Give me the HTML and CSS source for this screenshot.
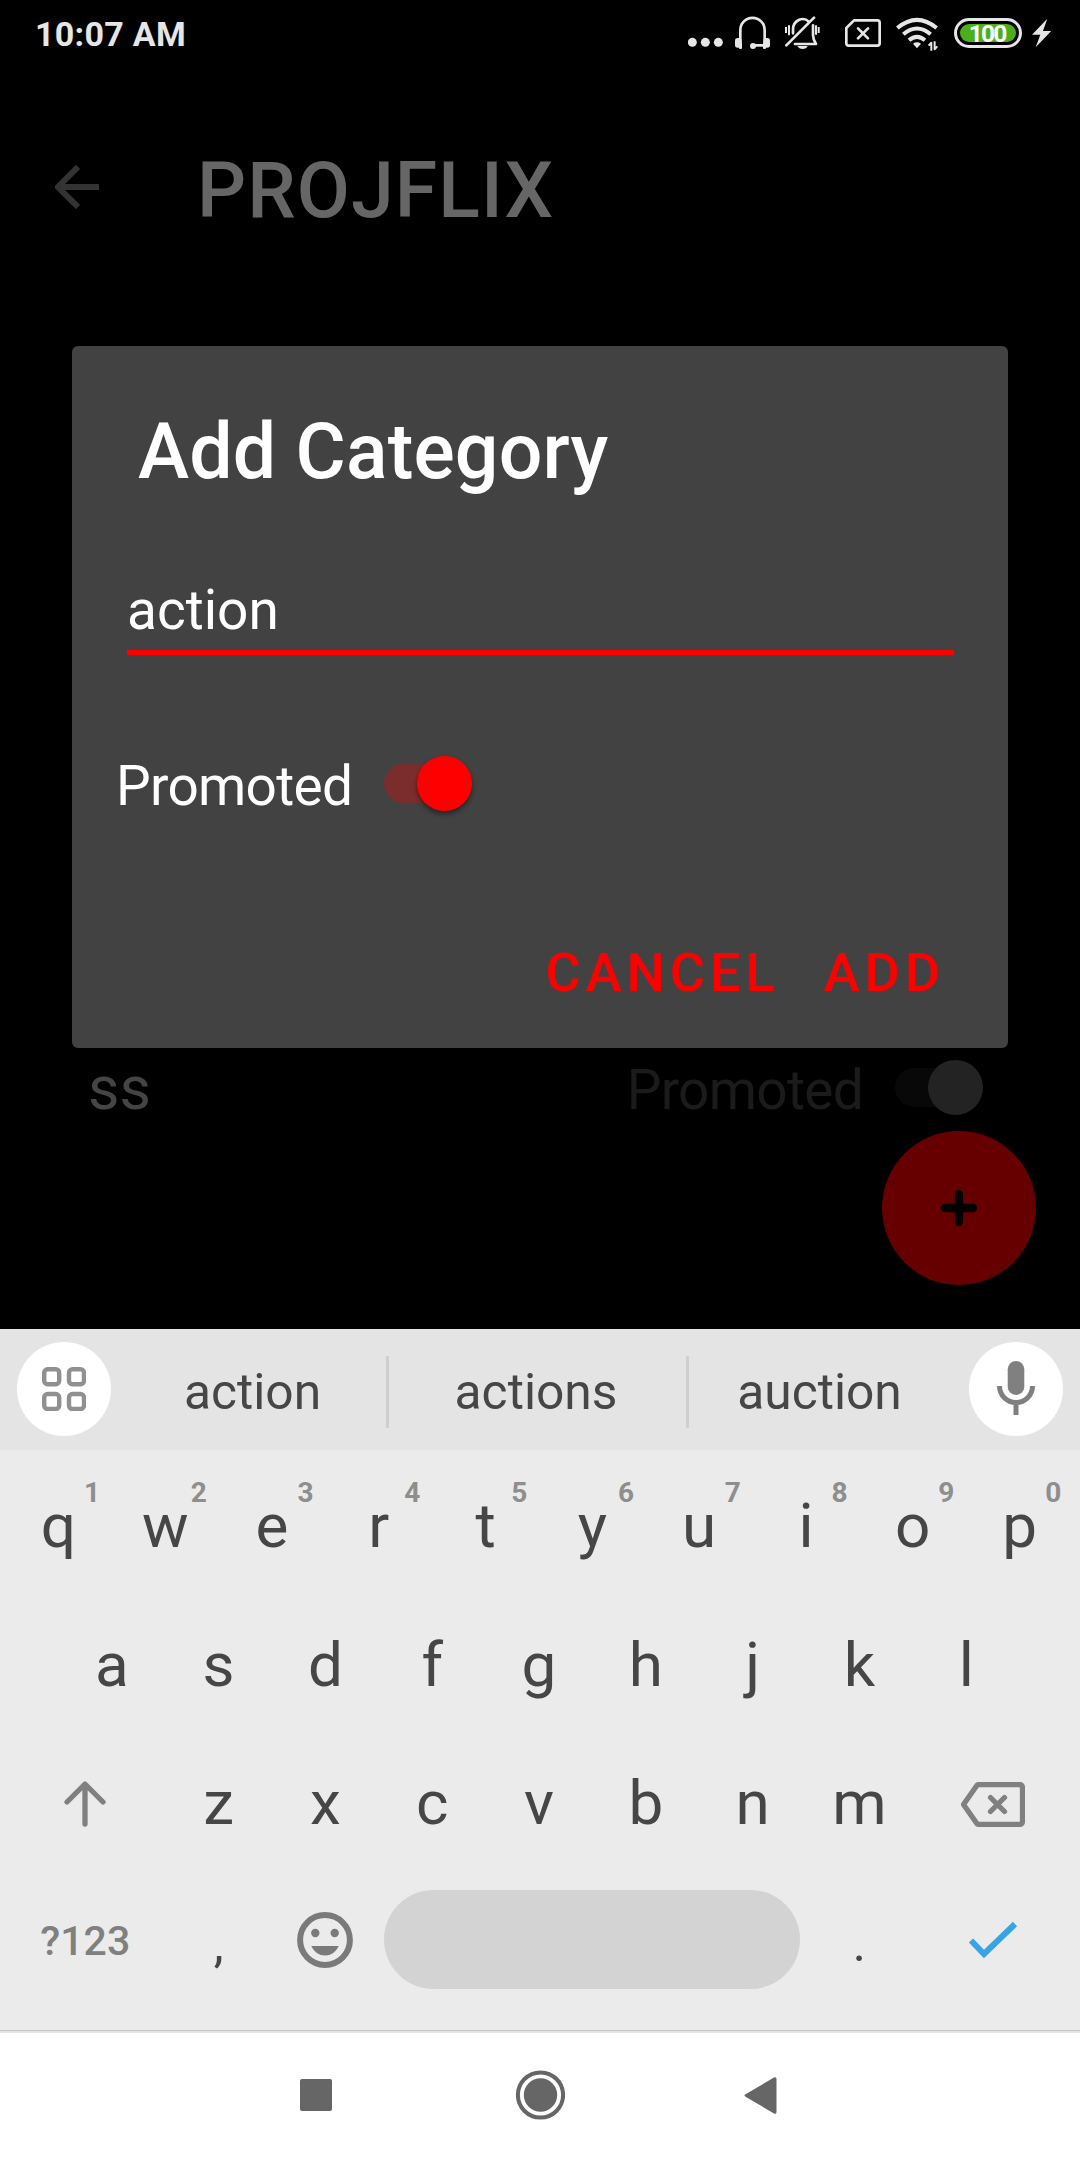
FILE: index.html
```html
<!DOCTYPE html>
<html lang="en">
<head>
<meta charset="utf-8">
<title>Projflix</title>
<link rel="stylesheet" href="styles.css">
</head>
<body>
<div class="screen">
  <div class="app">
    <header class="status-bar">
      <span class="clock">10:07 AM</span>
      <div class="status-icons">
        <svg class="st-dots" viewBox="54 0 105 210"><circle cx="67" cy="127" r="13.5"/><circle cx="106" cy="127" r="13.5"/><circle cx="145" cy="127" r="13.5"/></svg>
        <svg class="st-headset" viewBox="195 0 105 210"><path class="line" d="M211 140V90a36 36 0 0 1 73 0v50M284 136H250"/><rect x="195" y="114" width="20" height="29" rx="8"/><rect x="280" y="114" width="20" height="29" rx="8"/><rect x="207" y="128" width="9" height="19" rx="3"/><rect x="279" y="128" width="9" height="19" rx="3"/><circle cx="249" cy="138" r="9"/></svg>
        <svg class="st-bell" viewBox="347 0 104 210"><path class="line" d="M371 100V88a29 31 0 0 1 48-23M431 76v30q0 12 9 26H377"/><path class="line" d="M351 136 434 53"/><path class="line thin" d="M350 81v18M359 76v30M440 76v28M448 81v18"/><path d="M384 138h31q-4 9-15 9t-16-9z"/></svg>
        <svg class="st-sim" viewBox="525 0 108 210"><path class="line" d="M552 61h70q7 0 7 7v62q0 7-7 7h-86q-7 0-7-7V84zM564 85l30 30M594 85l-30 30"/></svg>
        <svg class="st-wifi" viewBox="678 0 127 210"><path class="line arc" d="M682 84q59-49 118 0M700 103q41-35 82 0M717 121q24-21 48 0"/><path d="M729 131q12-9 24 0l-12 14z"/><path class="line thin" d="M784 152v-24l-8 9M794 124v24l8-9"/></svg>
        <div class="battery"><span class="battery-level">100</span></div>
        <svg class="st-bolt" viewBox="1086 0 58 210"><path d="M1132 56 1086 104h25l-14 38 47-49h-25z"/></svg>
      </div>
    </header>
    <div class="app-header">
      <svg class="back" viewBox="55 165 44 44"><path d="M99 187H59M78 167 58 187l20 20"/></svg>
      <h1 class="brand">PROJFLIX</h1>
    </div>
    <main class="list">
      <div class="category">
        <span class="category-name">ss</span>
        <span class="category-flag">Promoted</span>
        <span class="switch switch-dim"><i class="thumb"></i></span>
      </div>
    </main>
    <div class="fab"><svg viewBox="0 0 36 36"><path d="M18 4v28M4 18h28"/></svg></div>
    <section class="dialog">
      <h2 class="dialog-title">Add Category</h2>
      <div class="field">action</div>
      <div class="toggle"><span>Promoted</span><span class="switch"><i class="thumb"></i></span></div>
      <div class="actions"><span>CANCEL</span><span>ADD</span></div>
    </section>
  </div>

  <div class="suggestions">
    <div class="round"><svg class="grid-icon" viewBox="0 0 44 44"><rect x="2.2" y="2.2" width="15" height="15" rx="3.5"/><rect x="27" y="2.2" width="15" height="15" rx="3.5"/><rect x="2.2" y="27" width="15" height="15" rx="3.5"/><rect x="27" y="27" width="15" height="15" rx="3.5"/></svg></div>
    <div class="words"><span class="word">action</span><span class="word">actions</span><span class="word">auction</span></div>
    <div class="round"><svg class="mic" viewBox="0 0 38 54"><rect x="10.7" y="0" width="16.6" height="34" rx="8.3"/><path d="M2.5 25a16.5 16.5 0 0 0 33 0M19 43v11"/></svg></div>
  </div>

  <div class="keyboard">
    <div class="row">
      <span class="key">q<b>1</b></span><span class="key">w<b>2</b></span><span class="key">e<b>3</b></span><span class="key">r<b>4</b></span><span class="key">t<b>5</b></span><span class="key">y<b>6</b></span><span class="key">u<b>7</b></span><span class="key">i<b>8</b></span><span class="key">o<b>9</b></span><span class="key">p<b>0</b></span>
    </div>
    <div class="row">
      <span class="key">a</span><span class="key">s</span><span class="key">d</span><span class="key">f</span><span class="key">g</span><span class="key">h</span><span class="key">j</span><span class="key">k</span><span class="key">l</span>
    </div>
    <div class="row">
      <span class="key wide"><svg class="shift" viewBox="0 0 42 46"><path d="M21 43V4M3 21 21 3l18 18"/></svg></span>
      <span class="key">z</span><span class="key">x</span><span class="key">c</span><span class="key">v</span><span class="key">b</span><span class="key">n</span><span class="key">m</span>
      <span class="key wide"><svg class="erase" viewBox="0 0 64 45"><path d="M18 2.5h40q3.500 0 3.500 3.500v33q0 3.500-3.500 3.500H18q-1.500 0-2.500-1.500L2.500 22.500 15.500 4q1-1.500 2.500-1.500zM29.500 15.500l14 14M43.500 15.500l-14 14"/></svg></span>
    </div>
    <div class="row bottom">
      <span class="key wide mode">?123</span>
      <span class="key mark">,</span>
      <span class="key"><svg class="smile" viewBox="0 0 56 56"><circle class="ring" cx="28" cy="28" r="24.900"/><circle cx="18.300" cy="21" r="4.200"/><circle cx="37.700" cy="21" r="4.200"/><path d="M14.200 34h27.600q-4.500 9.500-13.800 9.500T14.200 34z"/></svg></span>
      <span class="space"></span>
      <span class="key mark">.</span>
      <span class="key wide"><svg class="check" viewBox="0 0 48 37"><path d="M2 18.500 15 32 46 2"/></svg></span>
    </div>
  </div>

  <nav class="nav">
    <svg viewBox="0 0 50 50"><rect x="9" y="9" width="32" height="32" rx="2"/></svg>
    <svg viewBox="0 0 50 50"><circle class="ring" cx="25.500" cy="25" r="22.600"/><circle cx="25.500" cy="25" r="16.700"/></svg>
    <svg viewBox="0 0 50 50"><path d="M6.500 24.300 35 7.500q2.500-1 2.500 1.500v33q0 2.500-2.500 1.500L6.500 26.700q-2-1.200 0-2.400z"/></svg>
  </nav>
</div>
</body>
</html>
```
FILE: styles.css
```css
* { box-sizing: border-box; }
body { margin: 0; background: #000; font-family: Roboto, "Liberation Sans", sans-serif; }
h1, h2 { margin: 0; font-weight: 500; }
svg { display: block; flex: none; }
.screen { width: 1080px; height: 2160px; display: flex; flex-direction: column; overflow: hidden; }

/* App */
.app { position: relative; height: 1329px; display: flex; flex-direction: column; background: #000; }
.status-bar { height: 70px; display: flex; justify-content: space-between; padding: 0 29px 0 35px; color: #e6e6e6; }
.clock { font-size: 34px; font-weight: 700; line-height: 69px; letter-spacing: .3px; }
.status-icons { display: flex; fill: #e6e6e6; }
.status-icons svg { height: 70px; }
.line { fill: none; stroke: #e6e6e6; stroke-width: 8; stroke-linecap: round; stroke-linejoin: round; }
.line.thin { stroke-width: 6; stroke-linecap: butt; }
.line.arc { stroke-width: 12; stroke-linecap: butt; }
.st-dots { width: 35px; margin-right: 12px; }
.st-headset { width: 35px; margin-right: 15.700px; }
.st-bell { width: 34.700px; margin-right: 24.700px; }
.st-sim { width: 36px; margin-right: 15px; }
.st-wifi { width: 42.300px; margin-right: 15.700px; }
.battery { width: 68px; height: 30px; margin: 18px 10px 0 0; padding: 3px; border: 3px solid #e6e6e6; border-radius: 15px; }
.battery-level { display: block; width: 56px; height: 18px; border-radius: 9px; background: #4caf1a; color: #fff; font-size: 24.500px; font-weight: 700; line-height: 19px; letter-spacing: -1.800px; padding-right: 1px; text-align: center; }
.st-bolt { width: 19.300px; }

.app-header { height: 242px; display: flex; align-items: center; padding-left: 55px; }
.back { width: 44px; height: 44px; margin: -8px 98px 0 0; fill: none; stroke: #333; stroke-width: 6; }
.brand { font-size: 77px; color: #666; line-height: 90px; letter-spacing: 1.100px; }

.list { flex: 1; display: flex; flex-direction: column; justify-content: flex-end; padding-bottom: 211px; }
.category { height: 60px; display: flex; align-items: center; padding: 0 97px 0 88px; }
.category-name { flex: 1; font-size: 61px; line-height: 60px; color: #444; }
.category-flag { font-size: 55px; line-height: 62px; letter-spacing: -.700px; color: #1b1b1b; margin: 4px 32px 0 0; }

.switch { display: flex; justify-content: flex-end; align-items: center; width: 88px; height: 39px; border-radius: 20px; background: #7b2d2e; }
.thumb { width: 55px; height: 55px; flex: none; border-radius: 50%; background: #f00; box-shadow: 0 3px 5px rgba(0,0,0,.45); }
.switch-dim { background: #080808; margin-top: -2px; }
.switch-dim .thumb { background: #232323; box-shadow: none; }

.fab { position: absolute; right: 44px; bottom: 44px; width: 154px; height: 154px; border-radius: 50%; background: #600; display: flex; align-items: center; justify-content: center; }
.fab svg { width: 36px; height: 36px; fill: none; stroke: #000; stroke-width: 8.300; stroke-linecap: round; }

.dialog { position: absolute; left: 72px; top: 346px; width: 936px; height: 702px; padding: 61px 54px 0 55px; border-radius: 6px; background: #424242; color: #fff; }
.dialog-title { font-size: 77px; line-height: 90px; padding-left: 11px; letter-spacing: .150px; }
.field { margin-top: 81px; height: 77px; font-size: 55px; line-height: 64px; border-bottom: 5px solid #f00; }
.toggle { display: flex; align-items: center; gap: 32px; height: 64px; margin: 99px 0 0 -11px; font-size: 55px; line-height: 64px; letter-spacing: -.700px; }
.toggle .switch { margin-top: -5px; }
.actions { display: flex; justify-content: flex-end; gap: 44px; margin: 123px 9px 0 0; font-size: 54px; font-weight: 500; line-height: 64px; letter-spacing: 5px; color: #f00; }

/* Keyboard */
.suggestions { height: 121px; display: flex; align-items: center; padding: 0 17px 1px; background: #e4e4e4; }
.round { width: 94px; height: 94px; border-radius: 50%; background: #fff; display: flex; align-items: center; justify-content: center; }
.words { flex: 1; height: 66px; display: grid; grid-template-columns: 275px 300px 283px; }
.word { font-size: 49.700px; line-height: 72px; color: #464646; text-align: center; }
.word:first-child { padding-left: 8px; }
.word:nth-child(2) { padding-right: 3px; }
.word:last-child { padding-right: 19px; }
.word + .word { border-left: 3px solid #cfcfcf; }
.grid-icon { width: 44px; height: 44px; fill: none; stroke: #909090; stroke-width: 4.400; }
.mic { width: 38px; height: 54px; margin-top: -2px; fill: #808080; }
.mic path { fill: none; stroke: #808080; stroke-width: 5; }

.keyboard { height: 580px; padding: 7px 2px 0 0; background: #ebebeb; color: #464646; }
.row { height: 138.500px; display: flex; justify-content: center; }
.row.bottom { height: 134px; align-items: center; }
.key { position: relative; width: 106.800px; display: flex; align-items: center; justify-content: center; font-size: 62px; line-height: 72px; }
.key b { position: absolute; left: 60px; top: 19px; width: 54px; font-size: 28px; line-height: 34px; text-align: center; color: #8e8e8e; }
.wide { width: 160.500px; }
.mode { font-size: 41px; font-weight: 500; color: #808080; padding-top: 2px; }
.mark { font-size: 50px; top: 4px; }
.space { width: 416px; height: 99px; margin: 0 6px 0 5px; border-radius: 50px; background: #d3d3d3; }
.row.bottom .wide { width: 160px; }
.shift, .erase { margin-top: 2px; fill: none; stroke: #808080; stroke-width: 5.300; stroke-linecap: round; stroke-linejoin: round; }
.shift { width: 42px; height: 46px; }
.erase { width: 64px; height: 45px; margin-right: 1px; }
.smile { width: 56px; height: 56px; fill: #7a7a7a; }
.ring { fill: none; stroke: #7a7a7a; stroke-width: 6; }
.check { width: 48px; height: 37px; margin-top: 2px; fill: none; stroke: #37a5e3; stroke-width: 6; overflow: visible; }

/* System navigation */
.nav { height: 130px; display: flex; justify-content: center; gap: 174px; padding-top: 40px; background: linear-gradient(#c6c6c6 1px, #e4e4e4 1px 3px, #fff 3px); fill: #666; }
.nav svg { width: 50px; height: 50px; }
.nav .ring { stroke: #666; stroke-width: 4; }
```
